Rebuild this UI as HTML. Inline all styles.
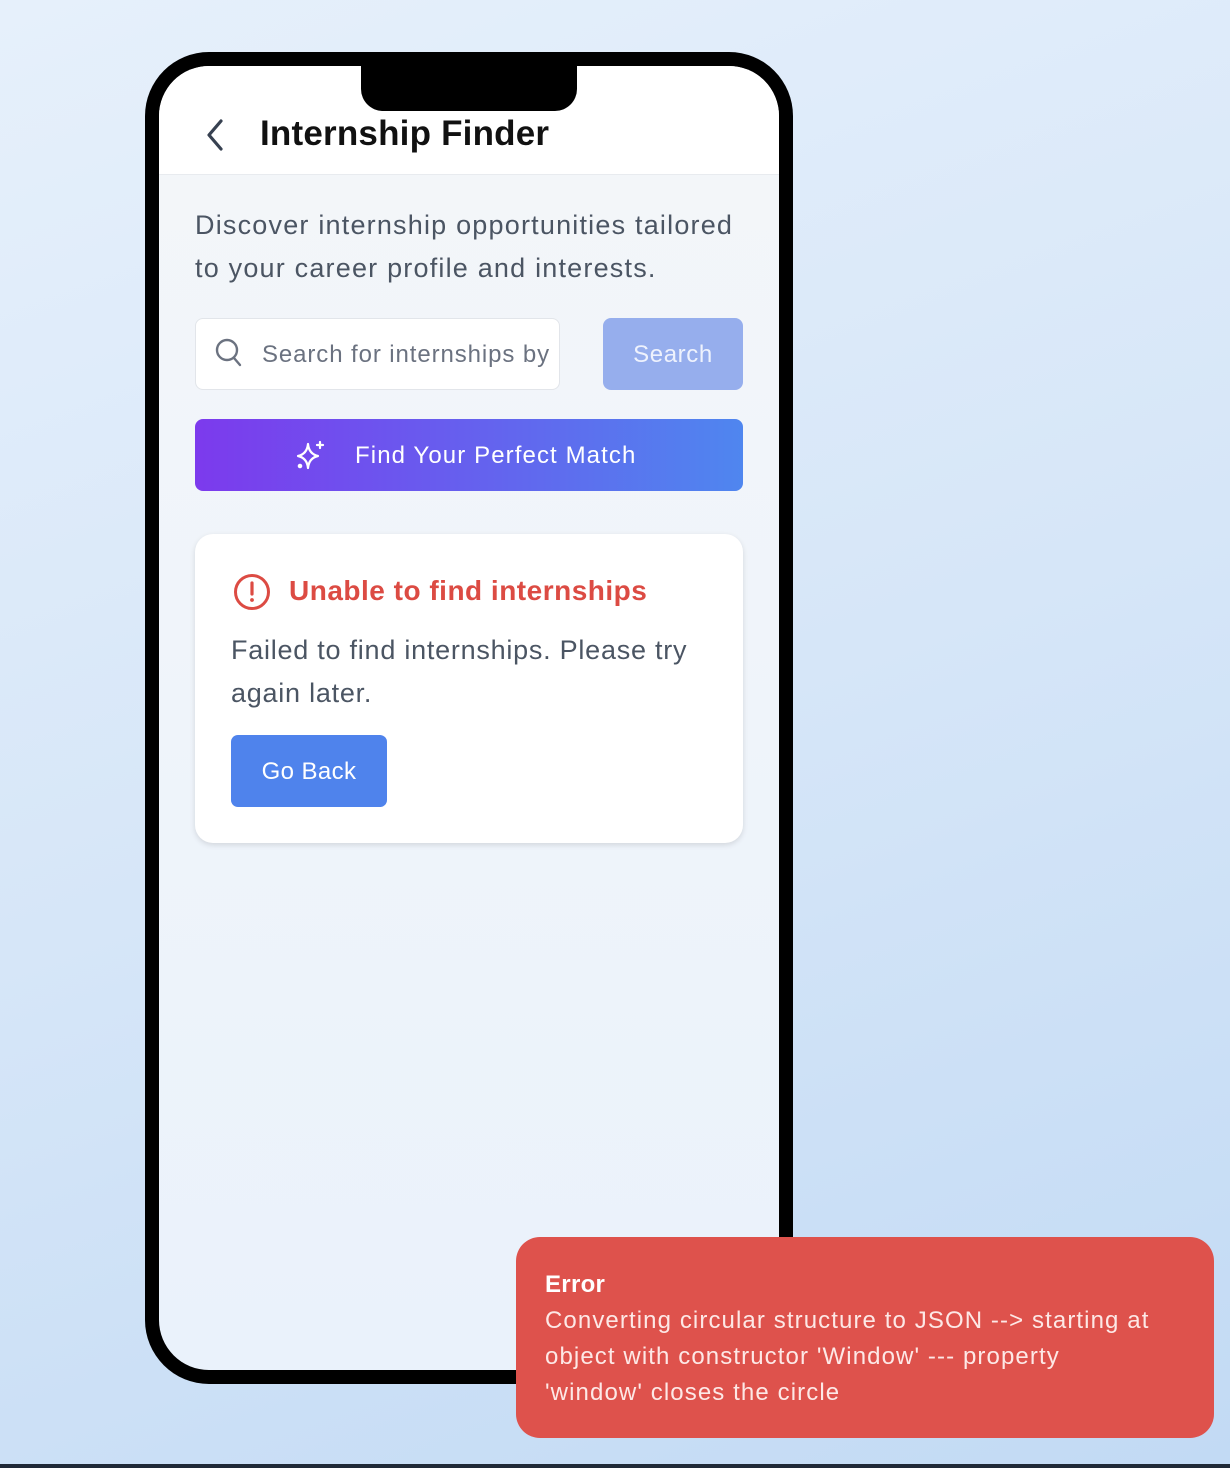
<!DOCTYPE html>
<html><head><meta charset="utf-8"><style>
*{box-sizing:border-box;margin:0;padding:0}
body{width:1230px;height:1468px;overflow:hidden;font-family:"Liberation Sans",sans-serif;background:linear-gradient(160deg,#e6f0fb 0%,#d6e6f8 50%,#c2daf4 100%);position:relative}
.bottomline{position:absolute;left:0;top:1464px;width:1230px;height:4px;background:#1f2937}
.phone{position:absolute;left:145px;top:52px;width:648px;height:1332px;background:#000;border-radius:64px}
.screen{position:absolute;left:14px;top:14px;width:620px;height:1304px;border-radius:50px;overflow:hidden;background:linear-gradient(180deg,#f4f6f9 0%,#eaf2fb 100%)}
.notch{position:absolute;left:202px;top:0;width:216px;height:45px;background:#000;border-radius:0 0 22px 22px}
.header{position:absolute;left:0;top:0;width:620px;height:109px;background:#fff;border-bottom:1px solid #e8ebef}
.back{position:absolute;left:44px;top:51px}
.title{position:absolute;left:101px;top:48px;font-size:35px;font-weight:bold;color:#111;letter-spacing:0.2px}
.desc{position:absolute;left:36px;top:138px;width:600px;font-size:27px;line-height:43px;color:#4b5563;letter-spacing:1.2px;white-space:nowrap}
.search{position:absolute;left:36px;top:252px;width:365px;height:72px;background:#fff;border:1px solid #e2e5ea;border-radius:8px}
.search span{position:absolute;left:66px;top:22px;font-size:24px;color:#6b7280;letter-spacing:0.9px;white-space:nowrap}
.sbtn{position:absolute;left:444px;top:252px;width:140px;height:72px;background:#96aeed;border-radius:8px;color:#eef2fd;font-size:24px;text-align:center;line-height:74px;letter-spacing:0.6px}
.match{position:absolute;left:36px;top:353px;width:548px;height:72px;border-radius:8px;background:linear-gradient(90deg,#7c3aed,#4f86ef);color:#fff;font-size:24px}
.match span{position:absolute;left:160px;top:23px;letter-spacing:1.1px;white-space:nowrap}
.card{position:absolute;left:36px;top:468px;width:548px;height:309px;background:#fff;border-radius:18px;box-shadow:0 2px 6px rgba(0,0,0,.12)}
.ctitle{position:absolute;left:94px;top:41px;font-size:28px;font-weight:bold;color:#dc4b43;letter-spacing:0.5px;white-space:nowrap}
.cdesc{position:absolute;left:36px;top:95px;width:520px;font-size:27px;line-height:43px;color:#4b5563;letter-spacing:0.75px;white-space:nowrap}
.goback{position:absolute;left:36px;top:201px;width:156px;height:72px;background:#4f83ec;border-radius:7px;color:#fff;font-size:24px;text-align:center;line-height:74px;letter-spacing:0.4px}
.toast{position:absolute;left:516px;top:1237px;width:698px;height:201px;background:#de524c;border-radius:24px;color:#fff;padding:32px 29px}
.toast b{display:block;font-size:24px;line-height:32px;letter-spacing:0.3px}
.toast p{font-size:24px;line-height:36px;color:#fde8e6;letter-spacing:1.1px;white-space:nowrap;margin-top:2px}
</style></head><body>
<div class="phone"><div class="screen">
<div class="header">
<svg class="back" width="24" height="36" viewBox="0 0 24 36"><path d="M18 4 L6 18 L18 32" fill="none" stroke="#374151" stroke-width="3.2" stroke-linecap="round" stroke-linejoin="round"/></svg>
<div class="title">Internship Finder</div>
</div>
<div class="notch"></div>
<div class="desc">Discover internship opportunities tailored<br>to your career profile and interests.</div>
<div class="search">
<svg style="position:absolute;left:19px;top:19px" width="28" height="30" viewBox="0 0 28 30"><circle cx="12" cy="12" r="10" fill="none" stroke="#6b7280" stroke-width="2.4"/><path d="M19 20 L25 27" stroke="#6b7280" stroke-width="2.4" stroke-linecap="round"/></svg>
<span>Search for internships by</span></div>
<div class="sbtn">Search</div>
<div class="match">
<svg style="position:absolute;left:100px;top:20px" width="32" height="32" viewBox="0 0 32 32" fill="none" stroke="#fff" stroke-width="2.2" stroke-linejoin="round"><path d="M13 5 Q14 15 23 17 Q14 19 13 29 Q12 19 3 17 Q12 15 13 5Z"/><path d="M25 3 v6 M22 6 h6" stroke-linecap="round"/><circle cx="5" cy="27" r="1.2" fill="#fff"/></svg>
<span>Find Your Perfect Match</span></div>
<div class="card">
<svg style="position:absolute;left:38px;top:39px" width="38" height="38" viewBox="0 0 38 38"><circle cx="19" cy="19" r="16.5" fill="none" stroke="#dc4b43" stroke-width="3"/><path d="M19 10 v11" stroke="#dc4b43" stroke-width="3.2" stroke-linecap="round"/><circle cx="19" cy="27" r="1.9" fill="#dc4b43"/></svg>
<div class="ctitle">Unable to find internships</div>
<div class="cdesc">Failed to find internships. Please try<br>again later.</div>
<div class="goback">Go Back</div>
</div>
</div></div>
<div class="toast"><b>Error</b><p>Converting circular structure to JSON --&gt; starting at<br>object with constructor 'Window' --- property<br>'window' closes the circle</p></div>
<div class="bottomline"></div>
</body></html>
